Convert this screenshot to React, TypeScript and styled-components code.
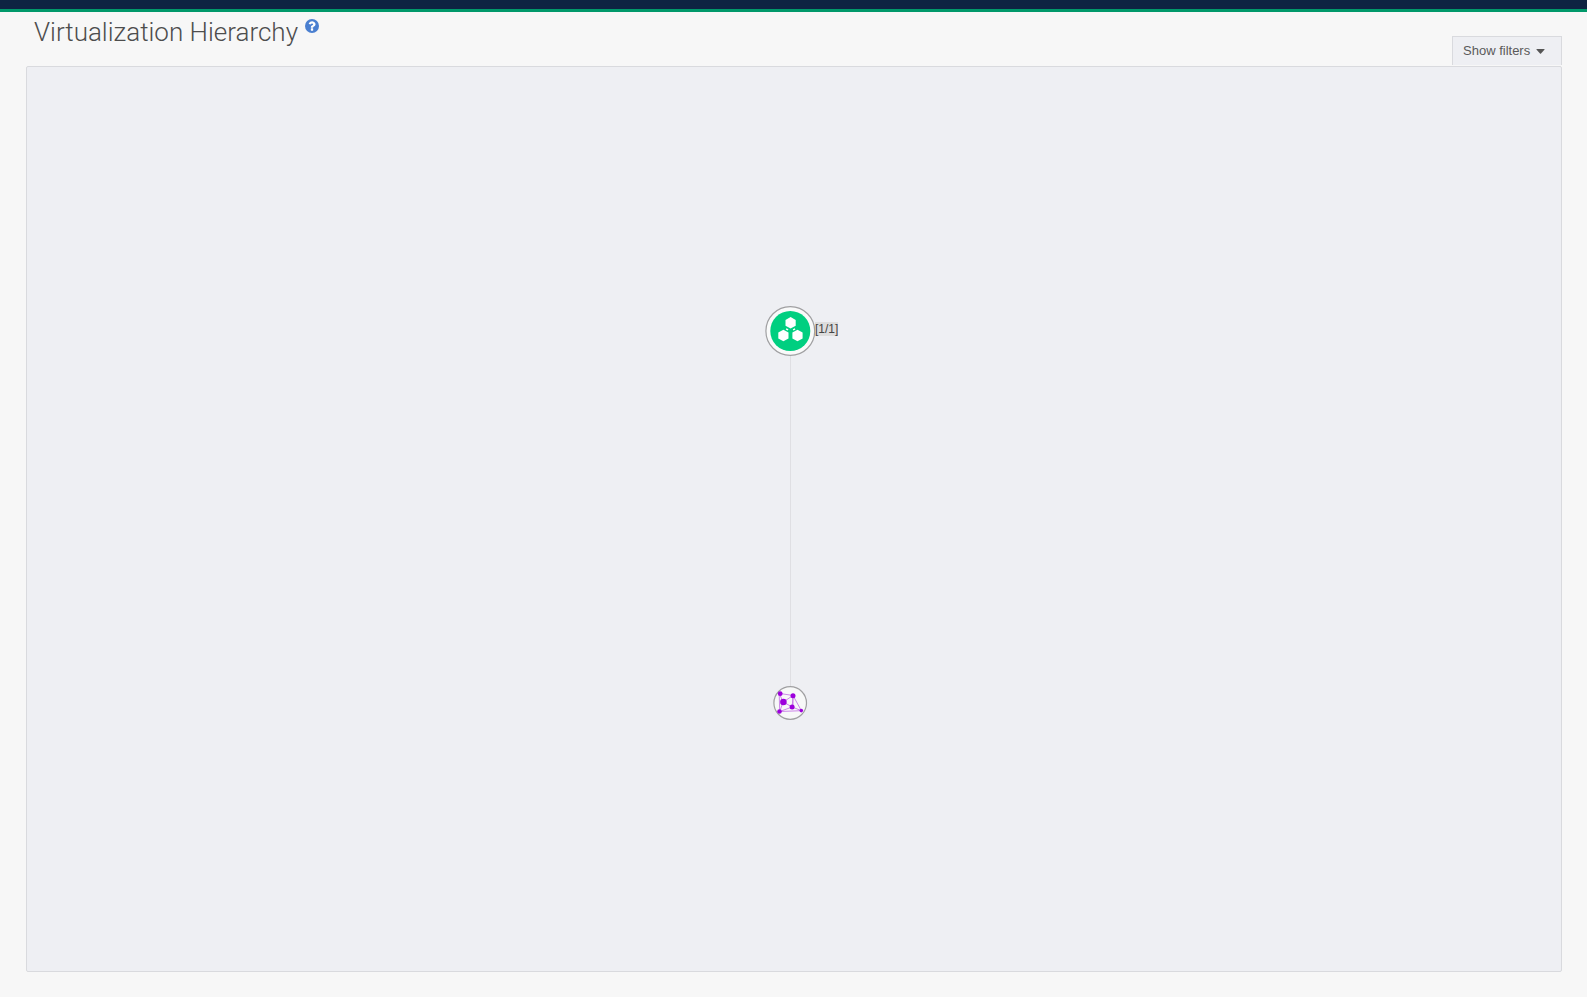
import React from "react";
import styled, { createGlobalStyle } from "styled-components";

const GlobalStyle = createGlobalStyle`
  *, *::before, *::after { box-sizing: border-box; }
  body {
    margin: 0;
    background: #f7f7f7;
    color: #4d4d4d;
    font-family: "Liberation Sans", Arial, sans-serif;
  }
`;

const Page = styled.div`
  display: flex;
  flex-direction: column;
  min-height: 100vh;
`;

const TopBar = styled.div`
  height: 12px;
  background: #0e2442;
  border-bottom: 3px solid #01996a;
`;

const Main = styled.main`
  display: flex;
  flex-direction: column;
  flex: 1;
  padding: 0 25px 25px 26px;
`;

const Header = styled.header`
  display: flex;
  justify-content: space-between;
  align-items: flex-end;
  height: 53px;
  margin-bottom: 1px;
`;

const TitleGroup = styled.div`
  display: flex;
  align-items: flex-start;
  gap: 7px;
  align-self: flex-start;
  padding: 4px 0 0 8px;
`;

const Title = styled.h1`
  margin: 0;
  font-family: Roboto, sans-serif;
  font-size: 26px;
  line-height: 32px;
  font-weight: 300;
`;

const HelpButton = styled.button`
  display: flex;
  margin: 3px 0 0;
  padding: 0;
  border: 0;
  background: none;
  cursor: pointer;
`;

const FiltersButton = styled.button`
  display: flex;
  align-items: center;
  gap: 6px;
  width: 110px;
  height: 29px;
  padding: 0 10px;
  border: 1px solid #d9dade;
  border-bottom: 0;
  background: #eeeff3;
  color: #5a5a5a;
  font: 13px/16px "Liberation Sans", Arial, sans-serif;
  cursor: pointer;

  svg {
    margin-top: 1px;
  }
`;

const Canvas = styled.section`
  position: relative;
  flex: 1;
  min-height: 700px;
  border: 1px solid #d9dade;
  border-radius: 2px;
  background: #eeeff3;
`;

const Link = styled.div`
  position: absolute;
  left: calc(50% - 4px);
  top: 289px;
  width: 1px;
  height: 330px;
  background: #dfdfe3;
`;

const Node = styled.button<{ $size: number; $y: number }>`
  position: absolute;
  left: calc(50% - 4px);
  top: ${(p) => p.$y}px;
  width: ${(p) => p.$size}px;
  height: ${(p) => p.$size}px;
  padding: 0;
  border: 0;
  border-radius: 50%;
  background: none;
  transform: translate(-50%, -50%);
  cursor: pointer;

  svg {
    display: block;
    overflow: visible;
  }
`;

const NodeLabel = styled.span`
  position: absolute;
  left: calc(50% + 21px);
  top: 255px;
  background: #dddddd;
  color: #444;
  font-size: 12px;
  line-height: 14px;
`;

function HelpIcon() {
  return (
    <svg width="14" height="14" viewBox="0 0 1536 1536" aria-hidden="true">
      <circle cx="768" cy="768" r="768" fill="#4a7fd0" />
      <path
        d="M896 1248v-192q0-14-9-23t-23-9h-192q-14 0-23 9t-9 23v192q0 14 9 23t23 9h192q14 0 23-9t9-23zm256-672q0-88-55.500-163t-138.500-116-170-41q-243 0-371 213-15 24 8 42l132 100q7 6 19 6 16 0 25-12 53-68 86-92 34-24 86-24 48 0 85.500 26t37.500 59q0 38-20 61t-68 45q-63 28-115.500 86.500t-52.500 125.500v36q0 14 9 23t23 9h192q14 0 23-9t9-23q0-19 21.500-49.500t54.500-49.500q32-18 49-28.500t46-35 44.500-48 28-60.500 12.500-81z"
        fill="#fff"
      />
    </svg>
  );
}

function ClusterIcon() {
  return (
    <svg width="50" height="50" viewBox="-25.300 -25 50 50" aria-hidden="true">
      <circle r="24.400" fill="#f9fafa" stroke="#a0a0a2" strokeWidth="1.200" />
      <circle r="20" fill="#00cf80" />
      <g fill="#fff">
        <path d="M0.300-14l5.100 2.900v5.800l-5.100 2.900-5.100-2.900v-5.800z" />
        <path d="M-6.900-1.300l5.100 2.900v5.800l-5.100 2.900-5.100-2.900v-5.800z" />
        <path d="M7.200-1.300l5.100 2.900v5.800l-5.100 2.900-5.100-2.900v-5.800z" />
      </g>
      <path d="M-4.200-2.200l2 1M4.800-2.200l-2 1" stroke="#fff" strokeWidth="1.400" />
    </svg>
  );
}

function MeshIcon() {
  return (
    <svg width="34" height="34" viewBox="-17.200 -17 34 34" aria-hidden="true">
      <circle r="16.300" fill="#f7f8f8" stroke="#a0a0a2" strokeWidth="1.200" />
      <path
        d="M-10-9.500L2.800-7.500L11.200 7.700L-10.500 8.500L-11-9.500L-7-1L2.800-7.500L2 4L-7-1L-10.500 8.500L2 4L11.200 7.700M2.800-7.500V4"
        fill="none"
        stroke="#c77be6"
        strokeWidth="0.900"
      />
      <g fill="#9c00dc">
        <circle cx="-10" cy="-9.300" r="2.400" />
        <circle cx="2.800" cy="-7.300" r="2.500" />
        <circle cx="-6.800" cy="-1" r="3.300" />
        <circle cx="1.900" cy="3.900" r="2.500" />
        <circle cx="-10.700" cy="8.500" r="2.300" />
        <circle cx="11.100" cy="7.600" r="1.800" />
      </g>
    </svg>
  );
}

export default function App() {
  return (
    <Page>
      <GlobalStyle />
      <TopBar />
      <Main>
        <Header>
          <TitleGroup>
            <Title>Virtualization Hierarchy</Title>
            <HelpButton type="button" aria-label="Help">
              <HelpIcon />
            </HelpButton>
          </TitleGroup>
          <FiltersButton type="button" aria-expanded={false}>
            Show filters
            <svg width="9" height="5" viewBox="0 0 9 5" aria-hidden="true">
              <path d="M1 0h7q1 0 .4.800L5 4.600q-.5.500-1 0L.6.800Q0 0 1 0z" fill="#555" />
            </svg>
          </FiltersButton>
        </Header>
        <Canvas aria-label="Hierarchy map">
          <Link />
          <Node type="button" $size={50} $y={264} aria-label="Cluster">
            <ClusterIcon />
          </Node>
          <NodeLabel>[1/1]</NodeLabel>
          <Node type="button" $size={34} $y={636} aria-label="Virtual network">
            <MeshIcon />
          </Node>
        </Canvas>
      </Main>
    </Page>
  );
}
